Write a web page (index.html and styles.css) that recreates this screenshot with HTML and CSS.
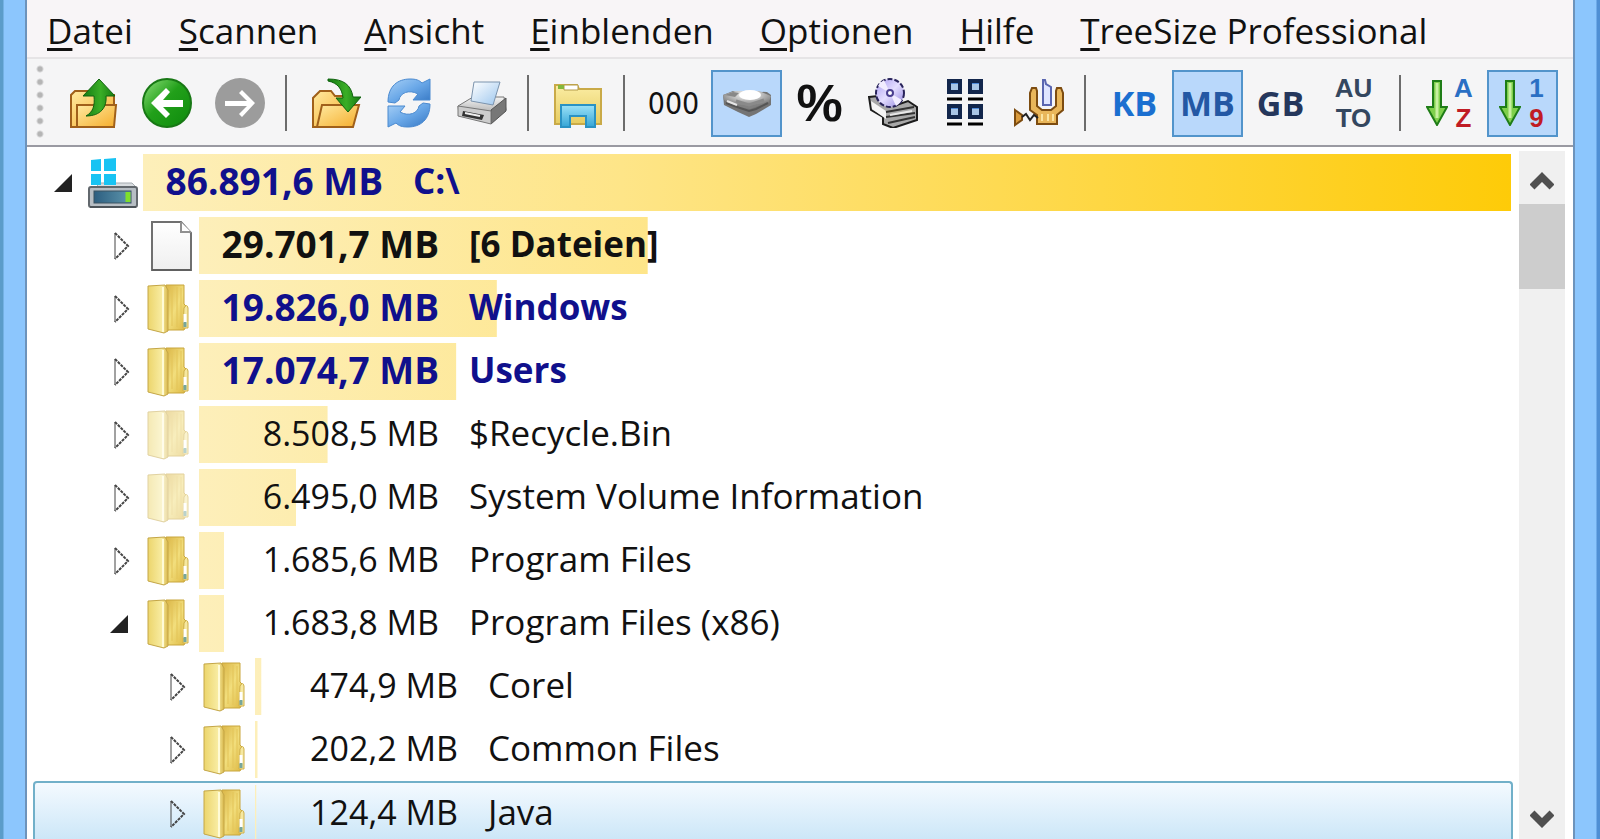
FILE: index.html
```html
<!DOCTYPE html>
<html lang="de">
<head>
  <title>TreeSize Professional</title>
  <meta charset="UTF-8">
  <meta name="viewport" content="width=device-width, initial-scale=1.0">
  <link rel="stylesheet" href="styles.css">
</head>
<body>
  <!-- Shared icon symbols -->
  <svg class="sprite" width="0" height="0" aria-hidden="true">
    <defs>
      <linearGradient id="g-orange" x1="0" y1="0" x2="1" y2="1">
        <stop offset="0" stop-color="#ffeaa0"/><stop offset="1" stop-color="#f5ad2c"/>
      </linearGradient>
      <linearGradient id="g-green" x1="0" y1="0" x2="1" y2="1">
        <stop offset="0" stop-color="#8fe07c"/><stop offset=".45" stop-color="#22a01a"/><stop offset="1" stop-color="#0d8a0c"/>
      </linearGradient>
      <linearGradient id="g-arrow" x1="0" y1="0" x2="1" y2="0">
        <stop offset="0" stop-color="#147a12"/><stop offset=".55" stop-color="#3aae26"/><stop offset="1" stop-color="#157a12"/>
      </linearGradient>
      <linearGradient id="g-blue" x1="0" y1="0" x2="1" y2="1">
        <stop offset="0" stop-color="#a8d0f6"/><stop offset=".5" stop-color="#6aa8e8"/><stop offset="1" stop-color="#3577c4"/>
      </linearGradient>
      <linearGradient id="g-cyan" x1="0" y1="0" x2="0" y2="1">
        <stop offset="0" stop-color="#9ce2f8"/><stop offset="1" stop-color="#35a5d6"/>
      </linearGradient>
      <linearGradient id="g-paper" x1="0" y1="0" x2="1" y2="1">
        <stop offset="0" stop-color="#ffffff"/><stop offset="1" stop-color="#9cc6ee"/>
      </linearGradient>
      <linearGradient id="g-sheet" x1="0" y1="0" x2="0" y2="1">
        <stop offset="0" stop-color="#ffffff"/><stop offset="1" stop-color="#efefef"/>
      </linearGradient>
      <linearGradient id="g-metal" x1="0" y1="0" x2="0" y2="1">
        <stop offset="0" stop-color="#f4f4f4"/><stop offset="1" stop-color="#888888"/>
      </linearGradient>
      <linearGradient id="g-front" x1="0" y1="0" x2="1" y2="0">
        <stop offset="0" stop-color="#ecd56c"/><stop offset=".7" stop-color="#f8eca2"/><stop offset="1" stop-color="#d8b74a"/>
      </linearGradient>
      <linearGradient id="g-back" x1="0" y1="0" x2="1" y2="1">
        <stop offset="0" stop-color="#d9b344"/><stop offset=".5" stop-color="#f2de7c"/><stop offset="1" stop-color="#dcb640"/>
      </linearGradient>
      <linearGradient id="g-explorer" x1="0" y1="0" x2="0" y2="1">
        <stop offset="0" stop-color="#fbeda4"/><stop offset="1" stop-color="#e6cc60"/>
      </linearGradient>
      <linearGradient id="g-lcd" x1="0" y1="0" x2="1" y2="0">
        <stop offset="0" stop-color="#2c5e80"/><stop offset="1" stop-color="#5f97ad"/>
      </linearGradient>
      <linearGradient id="g-disc" x1="0" y1="0" x2="1" y2="1">
        <stop offset="0" stop-color="#a79af0"/><stop offset=".5" stop-color="#e4deff"/><stop offset="1" stop-color="#8f82dd"/>
      </linearGradient>
      <radialGradient id="g-disk" cx=".5" cy=".2" r=".6">
        <stop offset="0" stop-color="#ffffff"/><stop offset=".4" stop-color="#cfcfcf"/><stop offset="1" stop-color="#808080"/>
      </radialGradient>
    </defs>

    <symbol id="i-folder" viewBox="0 0 50 50">
      <path d="M22 1h18v19l3 3v18l-3 5H21z" fill="url(#g-back)" stroke="#c9a63c"/>
      <path d="M28 4v38M33 3v40M37 4v38" stroke="#e3c458" fill="none"/>
      <path d="M4 2l17-1 3 5v41l-4 2-16-4z" fill="url(#g-front)" stroke="#c4a647"/>
      <path d="M19 3v45" stroke="#fffbd6" stroke-width="2"/>
      <path d="M40 24q3-5 4 0v20h-5z" fill="#f6e8a0" stroke="#cfb04a"/>
      <path d="M41 30v9" stroke="#fff" stroke-width="3"/>
      <path d="M41 38v5" stroke="#77a69a" stroke-width="3"/>
    </symbol>
    <symbol id="i-file" viewBox="0 0 50 50">
      <path d="M8 1h29l10 11v37H8z" fill="url(#g-sheet)" stroke="#707070" stroke-width="2"/>
      <path d="M37 1v10h10" fill="#fff" stroke="#909090" stroke-width="2"/>
      <path d="M8 49h39" stroke="#606060" stroke-width="2"/>
    </symbol>
    <symbol id="i-drive" viewBox="0 0 50 50">
      <path d="M8 29l4-4h32l5 5z" fill="#d9dde0" stroke="#a5abb0"/>
      <path d="M3 2l10-1v12H3zM16 1l12-1v13H16zM3 16h10v11H3zM16 16h12v11H16z" fill="#18c3f3"/>
      <rect x="1" y="29" width="48" height="20" rx="2" fill="#b7bec4" stroke="#62686d" stroke-width="2"/>
      <rect x="6" y="33" width="37" height="12" fill="url(#g-lcd)" stroke="#3b5260"/>
      <path d="M40 34v10" stroke="#7fe02a" stroke-width="5"/>
      <path d="M2 49h46" stroke="#4d5459" stroke-width="2"/>
    </symbol>
    <symbol id="i-up" viewBox="0 0 50 50">
      <path d="M2 49V17l4-4h13l4 4h22v32z" fill="url(#g-orange)" stroke="#a0601a" stroke-width="2"/>
      <path d="M8 49V27h39l-2 22z" fill="url(#g-orange)" stroke="#a0601a" stroke-width="2"/>
      <path d="M30 1l16 17h-9c1 11-5 20-20 20 7-4 9-10 8-20H14z" fill="url(#g-arrow)" stroke="#0f620e"/>
    </symbol>
    <symbol id="i-back" viewBox="0 0 50 50">
      <circle cx="25" cy="25" r="24" fill="url(#g-green)" stroke="#187815" stroke-width="2"/>
      <path d="M9 25l15-15 4 4-7 8h20v7H21l7 7-4 4z" fill="#fff"/>
    </symbol>
    <symbol id="i-forward" viewBox="0 0 50 50">
      <circle cx="25" cy="25" r="25" fill="#9c9c9c"/>
      <path d="M40 25L27 12l-3 3 8 8H10v5h22l-8 8 3 3z" fill="#fff"/>
    </symbol>
    <symbol id="i-open" viewBox="0 0 50 50">
      <path d="M2 49V20l7-7h11l4 5h14v31z" fill="url(#g-orange)" stroke="#a0601a" stroke-width="2"/>
      <path d="M6 49l5-22h37l-6 22z" fill="url(#g-orange)" stroke="#a0601a" stroke-width="2"/>
      <path d="M17 1c16 0 23 6 25 18h8L37 34 25 20h7C31 11 27 5 17 3z" fill="url(#g-arrow)" stroke="#0f620e"/>
    </symbol>
    <symbol id="i-refresh" viewBox="0 0 50 50">
      <path d="M4 24C4 8 14 1 26 1c6 0 9 1 12 4l8-4v21H29l5-6c-9-5-18-1-19 6l-4 3z" fill="url(#g-blue)" stroke="#4b8ad0"/>
      <path d="M46 26c0 16-10 23-22 23-6 0-9-1-12-4l-8 4V28h17l-5 6c9 5 18 1 19-6l4-3z" fill="url(#g-blue)" stroke="#4b8ad0"/>
    </symbol>
    <symbol id="i-print" viewBox="0 0 50 50">
      <path d="M1 28l15-9h31l2 13-15 13-32-8z" fill="url(#g-metal)" stroke="#777"/>
      <path d="M34 32l15-12v13L34 46z" fill="#777" stroke="#555"/>
      <path d="M17 4h26l-7 23-22-4z" fill="url(#g-paper)" stroke="#7b93ad"/>
      <path d="M1 28l33 5v13L1 38z" fill="#ccc" stroke="#777"/>
      <path d="M6 33l21 4-2 5-20-4z" fill="#333"/>
      <path d="M8 35l15 3" stroke="#eee" stroke-width="2"/>
    </symbol>
    <symbol id="i-explorer" viewBox="0 0 50 50">
      <path d="M2 46V7h22l2 4h22v35z" fill="url(#g-explorer)" stroke="#c9aa48" stroke-width="2"/>
      <path d="M11 7h14v5H11z" fill="#fff" stroke="#b49c4a"/>
      <path d="M5 9h6" stroke="#84b83c" stroke-width="4"/>
      <path d="M8 49V27h34v22h-9V38H17v11z" fill="url(#g-cyan)" stroke="#2a92c4" stroke-width="2"/>
    </symbol>
    <symbol id="i-disk" viewBox="0 0 50 50">
      <path d="M1 17l10-4 34 1 4 3v10L34 36l-7 3-11-5L2 27z" fill="#747474"/>
      <path d="M1 17l12-4h24l12 5-2 6-19 7-16-3L2 22z" fill="url(#g-disk)"/>
      <path d="M3 17l8-3 6 1-4 4z" fill="#888"/>
      <ellipse cx="28" cy="17" rx="11" ry="5" fill="#fff"/>
      <path d="M4 25l14 5 9 3 7-2 12-6" stroke="#555" stroke-width="2" fill="none"/>
      <path d="M14 23l13 4 15-5" stroke="#8a8a8a" stroke-width="3" fill="none"/>
      <path d="M5 23l10 4" stroke="#e6e6e6" stroke-width="2"/>
    </symbol>
    <symbol id="i-disc" viewBox="0 0 50 50">
      <path d="M1 19l9-1 16 10 14-5 9 6v13L25 50 15 46V39L3 32z" fill="#a8a8a8" stroke="#1c1c1c" stroke-width="2"/>
      <path d="M3 23l15 10v8L4 31z" fill="#f5f5f5"/>
      <path d="M18 34l28-5M18 39l29-4M20 45l27-6" stroke="#333" stroke-width="2"/>
      <path d="M22 37l22-4" stroke="#e8e8e8" stroke-width="2"/>
      <circle cx="22" cy="15" r="14" fill="url(#g-disc)" stroke="#28235a" stroke-width="2" stroke-dasharray="5 2"/>
      <path d="M22 15L10 8a14 14 0 0 1 6-6zM22 15l12 7a14 14 0 0 1-6 6z" fill="#f1edff"/>
      <circle cx="22" cy="15" r="3" fill="#fff" stroke="#4a3f8f" stroke-width="2"/>
    </symbol>
    <symbol id="i-grid" viewBox="0 0 50 50">
      <path d="M8 3h11v11H8zM29 3h11v11H29zM8 28h11v11H8zM29 28h11v11H29z" fill="#4f8ad8" stroke="#12264c" stroke-width="4"/>
      <path d="M10 6h7v6h-7zM31 6h7v6h-7zM10 31h7v6h-7zM31 31h7v6h-7z" fill="#a9c6e6"/>
      <path d="M6 21h15M27 21h15M6 46h15M27 46h15" stroke="#000" stroke-width="3"/>
    </symbol>
    <symbol id="i-tool" viewBox="0 0 50 50">
      <path d="M29 27V2h2l1 4 5 3v18z" fill="#dfe5ff" stroke="#5a66b0" stroke-width="2"/>
      <path d="M22 10h-4l-2 5v17l7 5v9h20v-9l6-5V15l-2-5h-4l-1 3v15l-5 4H28l-5-4V13z" fill="#e9b65a" stroke="#7d4c10" stroke-width="2"/>
      <path d="M1 32l7 5v5l-7 5z" fill="#d99a3c" stroke="#7d4c10" stroke-width="2"/>
      <path d="M8 39l4-3 4 6 4-5 4 3" stroke="#222" stroke-width="2" fill="none"/>
      <path d="M28 36v7M34 36v7M39 36v7" stroke="#fbe3a0" stroke-width="2"/>
    </symbol>
    <symbol id="i-down" viewBox="0 0 22 46">
      <path d="M7 1h8v26h6L11 45 1 27h6z" fill="#7fd04c" stroke="#1f7d17" stroke-width="2"/>
      <path d="M11 3v35" stroke="#c8f0a0" stroke-width="3"/>
    </symbol>
    <symbol id="i-closed" viewBox="0 0 24 30">
      <path d="M7 2v26" stroke="#444" stroke-width="1"/>
      <path d="M7 2l13 13L7 28" fill="none" stroke="#444" stroke-width="2" stroke-dasharray="3 1"/>
    </symbol>
    <symbol id="i-expanded" viewBox="0 0 24 30">
      <path d="M20 6v18H2z" fill="#222"/>
    </symbol>
  </svg>

  <div class="window">
    <nav class="menu">
      <button><u>D</u>atei</button>
      <button><u>S</u>cannen</button>
      <button><u>A</u>nsicht</button>
      <button><u>E</u>inblenden</button>
      <button><u>O</u>ptionen</button>
      <button><u>H</u>ilfe</button>
      <button><u>T</u>reeSize Professional</button>
    </nav>

    <div class="toolbar">
      <span class="grip"></span>
      <button class="tool" aria-label="Nach oben"><svg><use href="#i-up"/></svg></button>
      <button class="tool" aria-label="Zurück"><svg><use href="#i-back"/></svg></button>
      <button class="tool" aria-label="Vorwärts" disabled><svg><use href="#i-forward"/></svg></button>
      <span class="sep"></span>
      <button class="tool" aria-label="Ordner öffnen"><svg><use href="#i-open"/></svg></button>
      <button class="tool" aria-label="Aktualisieren"><svg><use href="#i-refresh"/></svg></button>
      <button class="tool" aria-label="Drucken"><svg><use href="#i-print"/></svg></button>
      <span class="sep"></span>
      <button class="tool" aria-label="Explorer"><svg><use href="#i-explorer"/></svg></button>
      <span class="sep"></span>
      <button class="tool digits">000</button>
      <button class="tool active" aria-label="Belegter Platz"><svg><use href="#i-disk"/></svg></button>
      <button class="tool percent">%</button>
      <button class="tool" aria-label="Datenträger"><svg><use href="#i-disc"/></svg></button>
      <button class="tool" aria-label="Dateianzahl"><svg><use href="#i-grid"/></svg></button>
      <button class="tool" aria-label="Werkzeuge"><svg><use href="#i-tool"/></svg></button>
      <span class="sep"></span>
      <button class="tool unit kb">KB</button>
      <button class="tool unit mb active">MB</button>
      <button class="tool unit gb">GB</button>
      <button class="tool auto">AU<br>TO</button>
      <span class="sep"></span>
      <button class="tool sort" aria-label="Nach Name sortieren"><svg><use href="#i-down"/></svg><span class="pair"><span class="first">A</span><span class="last">Z</span></span></button>
      <button class="tool sort active" aria-label="Nach Größe sortieren"><svg><use href="#i-down"/></svg><span class="pair"><span class="first">1</span><span class="last">9</span></span></button>
    </div>

    <div class="content">
      <ul class="tree">
        <li class="row strong blue">
          <button class="toggle" aria-label="Zuklappen"><svg><use href="#i-expanded"/></svg></button>
          <svg class="icon"><use href="#i-drive"/></svg>
          <div class="track"><span class="bar" style="--share: 100%"></span><span class="label"><span class="size">86.891,6 MB</span><span class="name">C:\</span></span></div>
        </li>
        <li class="row level-1 strong">
          <button class="toggle" aria-label="Aufklappen"><svg><use href="#i-closed"/></svg></button>
          <svg class="icon"><use href="#i-file"/></svg>
          <div class="track"><span class="bar" style="--share: 34.2%"></span><span class="label"><span class="size">29.701,7 MB</span><span class="name">[6 Dateien]</span></span></div>
        </li>
        <li class="row level-1 strong blue">
          <button class="toggle" aria-label="Aufklappen"><svg><use href="#i-closed"/></svg></button>
          <svg class="icon"><use href="#i-folder"/></svg>
          <div class="track"><span class="bar" style="--share: 22.7%"></span><span class="label"><span class="size">19.826,0 MB</span><span class="name">Windows</span></span></div>
        </li>
        <li class="row level-1 strong blue">
          <button class="toggle" aria-label="Aufklappen"><svg><use href="#i-closed"/></svg></button>
          <svg class="icon"><use href="#i-folder"/></svg>
          <div class="track"><span class="bar" style="--share: 19.6%"></span><span class="label"><span class="size">17.074,7 MB</span><span class="name">Users</span></span></div>
        </li>
        <li class="row level-1 hidden-item">
          <button class="toggle" aria-label="Aufklappen"><svg><use href="#i-closed"/></svg></button>
          <svg class="icon"><use href="#i-folder"/></svg>
          <div class="track"><span class="bar" style="--share: 9.8%"></span><span class="label"><span class="size">8.508,5 MB</span><span class="name">$Recycle.Bin</span></span></div>
        </li>
        <li class="row level-1 hidden-item">
          <button class="toggle" aria-label="Aufklappen"><svg><use href="#i-closed"/></svg></button>
          <svg class="icon"><use href="#i-folder"/></svg>
          <div class="track"><span class="bar" style="--share: 7.4%"></span><span class="label"><span class="size">6.495,0 MB</span><span class="name">System Volume Information</span></span></div>
        </li>
        <li class="row level-1">
          <button class="toggle" aria-label="Aufklappen"><svg><use href="#i-closed"/></svg></button>
          <svg class="icon"><use href="#i-folder"/></svg>
          <div class="track"><span class="bar" style="--share: 1.9%"></span><span class="label"><span class="size">1.685,6 MB</span><span class="name">Program Files</span></span></div>
        </li>
        <li class="row level-1">
          <button class="toggle" aria-label="Zuklappen"><svg><use href="#i-expanded"/></svg></button>
          <svg class="icon"><use href="#i-folder"/></svg>
          <div class="track"><span class="bar" style="--share: 1.9%"></span><span class="label"><span class="size">1.683,8 MB</span><span class="name">Program Files (x86)</span></span></div>
        </li>
        <li class="row level-2">
          <button class="toggle" aria-label="Aufklappen"><svg><use href="#i-closed"/></svg></button>
          <svg class="icon"><use href="#i-folder"/></svg>
          <div class="track"><span class="bar" style="--share: 0.5%"></span><span class="label"><span class="size">474,9 MB</span><span class="name">Corel</span></span></div>
        </li>
        <li class="row level-2">
          <button class="toggle" aria-label="Aufklappen"><svg><use href="#i-closed"/></svg></button>
          <svg class="icon"><use href="#i-folder"/></svg>
          <div class="track"><span class="bar" style="--share: 0.2%"></span><span class="label"><span class="size">202,2 MB</span><span class="name">Common Files</span></span></div>
        </li>
        <li class="row level-2 selected">
          <button class="toggle" aria-label="Aufklappen"><svg><use href="#i-closed"/></svg></button>
          <svg class="icon"><use href="#i-folder"/></svg>
          <div class="track"><span class="bar" style="--share: 0.1%"></span><span class="label"><span class="size">124,4 MB</span><span class="name">Java</span></span></div>
        </li>
      </ul>
      <div class="scrollbar">
        <button class="scroll-up" aria-label="Nach oben blättern"><svg viewBox="0 0 24 20"><path d="M2 16L12 6l10 10" fill="none" stroke="#505050" stroke-width="7"/></svg></button>
        <div class="thumb"></div>
        <button class="scroll-down" aria-label="Nach unten blättern"><svg viewBox="0 0 24 20"><path d="M2 4l10 10L22 4" fill="none" stroke="#505050" stroke-width="7"/></svg></button>
      </div>
    </div>
  </div>
</body>
</html>
```

FILE: styles.css
```css
* {
  box-sizing: border-box;
}
body {
  margin: 0;
  height: 100vh;
  overflow: hidden;
  padding: 0 25px;
  background: linear-gradient(90deg, #5b9cc9 0, #5b9cc9 3px, #8cc6fd 4px, #8cc6fd calc(100% - 4px), #4f8fd4 calc(100% - 3px));
  color: #111;
  font-family: "Open Sans", "Segoe UI", sans-serif;
  font-size: 34px;
}
button {
  margin: 0;
  padding: 0;
  border: none;
  background: none;
  color: inherit;
  font: inherit;
  white-space: nowrap;
}
.sprite {
  position: absolute;
}
.window {
  height: 100%;
  display: flex;
  flex-direction: column;
  background: #f5f5f6;
  border: solid #6d93bb;
  border-width: 0 2px;
}

/* Menu */
.menu {
  display: flex;
  gap: 46px;
  height: 59px;
  padding: 4px 20px 0;
  align-items: center;
  background: #f8f5f7;
  border-bottom: 2px solid #e6e4e6;
}
.menu button {
  font-size: 35px;
  line-height: 52px;
}
.menu u {
  text-decoration-thickness: 3px;
  text-underline-offset: 4px;
}

/* Toolbar */
.toolbar {
  display: flex;
  gap: 2px;
  align-items: center;
  height: 88px;
  flex: none;
  padding: 2px 0 0 9px;
  border-bottom: 2px solid #9a9aa2;
}
.grip {
  width: 8px;
  height: 78px;
  margin-right: 12px;
  background: radial-gradient(circle at 4px 5px, #b5b5b5 2px, transparent 4px) 0 0 / 8px 13px;
}
.tool {
  display: flex;
  justify-content: center;
  align-items: center;
  flex: none;
  width: 71px;
  height: 67px;
  border: 2px solid transparent;
}
.tool.active {
  background: #b9d8fb;
  border-color: #5294cb;
}
.tool svg {
  width: 50px;
  height: 50px;
}
.sep {
  flex: none;
  width: 2px;
  height: 56px;
  margin: 0 11px 0 8px;
  background: #6c6c6c;
}
.digits {
  font-family: "DejaVu Sans Condensed", Roboto, sans-serif;
  font-size: 30px;
}
.percent {
  font-family: "Liberation Sans", Arial, sans-serif;
  font-size: 52px;
  font-weight: 700;
}
.unit {
  font-size: 34px;
  font-weight: 700;
}
.kb {
  color: #1b6fd0;
}
.mb {
  color: #2458a4;
}
.gb {
  color: #25375c;
}
.auto,
.pair {
  font-family: "Liberation Sans", Arial, sans-serif;
  font-size: 26px;
  font-weight: 700;
  line-height: 30px;
}
.auto {
  color: #34475f;
}
.sort {
  gap: 6px;
}
.sort svg {
  width: 22px;
  height: 46px;
}
.pair {
  display: flex;
  flex-direction: column;
  width: 20px;
  text-align: center;
}
.first {
  color: #2a6fc4;
}
.last {
  color: #c01c24;
}

/* Tree */
.content {
  flex: 1;
  min-height: 0;
  display: flex;
  gap: 6px;
  padding: 4px 8px 0 6px;
  background: #fff;
}
.tree {
  flex: 1;
  margin: 0;
  padding: 0;
  list-style: none;
}
.row {
  display: flex;
  align-items: center;
  height: 63px;
  padding-left: 17px;
  border: solid transparent;
  border-width: 0 2px;
}
.level-1 {
  padding-left: 73px;
}
.level-2 {
  padding-left: 129px;
}
.toggle {
  width: 24px;
  height: 30px;
  margin-right: 12px;
}
.toggle svg {
  display: block;
  width: 24px;
  height: 30px;
}
.icon {
  flex: none;
  width: 50px;
  height: 50px;
  margin-right: 5px;
}
.hidden-item .icon {
  opacity: 0.5;
}
.track {
  flex: 1;
  display: grid;
  height: 57px;
}
.bar,
.label {
  grid-area: 1 / 1;
}
.bar {
  background: linear-gradient(90deg, #fdefba, #fee588 35%, #fecb08);
  clip-path: inset(0 calc(100% - var(--share)) 0 0);
}
.label {
  z-index: 1;
  display: flex;
  align-items: center;
  gap: 30px;
  padding-bottom: 4px;
  white-space: nowrap;
}
.size {
  width: 240px;
  text-align: right;
}
.name {
  font-size: 35px;
}
.level-2 .size {
  width: 203px;
}
.strong {
  font-weight: 700;
}
.strong .size {
  font-size: 37px;
}
.blue {
  color: #10108c;
}
.selected {
  border-color: #71b0c9;
  border-top-width: 2px;
  border-radius: 4px 4px 0 0;
  background: linear-gradient(#f4faff, #c9e5f7);
}

/* Scrollbar */
.scrollbar {
  display: flex;
  flex-direction: column;
  width: 46px;
  background: #f0f0f0;
}
.scrollbar svg {
  width: 24px;
  height: 20px;
}
.scroll-up {
  height: 53px;
}
.thumb {
  height: 85px;
  background: #cdcdcd;
}
.scroll-down {
  height: 46px;
  margin-top: auto;
}
```
